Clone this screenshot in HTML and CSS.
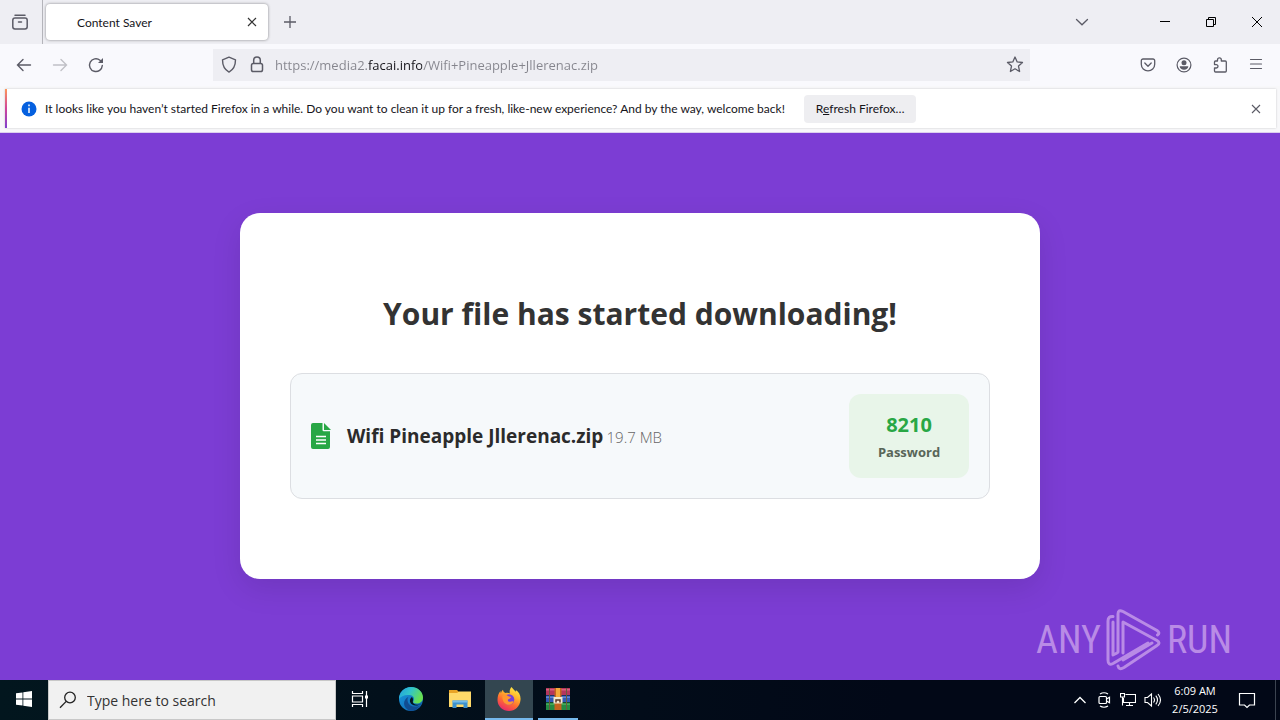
FILE: index.html
```html
<!DOCTYPE html>
<html lang="en">
<head>
  <meta charset="UTF-8" />
  <meta name="viewport" content="width=device-width, initial-scale=1.0" />
  <title>Content Saver</title>
  <link rel="stylesheet" href="styles.css">
</head>
<body>
  <header class="browser">
    <div class="tab-bar">
      <button class="icon-btn view-btn" aria-label="Recent browsing">
        <svg width="18" height="18" viewBox="0 0 18 18" fill="none" stroke="#5b5b66" stroke-width="1.5" stroke-linecap="round"><path d="M4 2.3h10"/><rect x="1.8" y="5" width="14.4" height="11" rx="2.2"/><path d="M7.5 9h3"/></svg>
      </button>
      <div class="tab">
        <span class="tab-title">Content Saver</span>
        <button class="icon-btn" aria-label="Close tab">
          <svg width="16" height="16" viewBox="0 0 16 16" fill="none" stroke="#333" stroke-width="1.2"><path d="M4 4l8 8M12 4l-8 8"/></svg>
        </button>
      </div>
      <button class="icon-btn new-tab" aria-label="New tab">
        <svg width="16" height="16" viewBox="0 0 16 16" fill="none" stroke="#5b5b66" stroke-width="1.3"><path d="M8 2v12M2 8h12"/></svg>
      </button>
      <div class="window-controls">
        <button class="icon-btn list-tabs" aria-label="List all tabs">
          <svg width="16" height="16" viewBox="0 0 16 16" fill="none" stroke="#5b5b66" stroke-width="1.3" stroke-linecap="round"><path d="M2.5 5.5L8 10.8l5.5-5.3"/></svg>
        </button>
        <button class="icon-btn win-btn" aria-label="Minimize">
          <svg width="12" height="12" viewBox="0 0 12 12" stroke="#000"><path d="M1 5.5h10"/></svg>
        </button>
        <button class="icon-btn win-btn" aria-label="Restore">
          <svg width="12" height="12" viewBox="0 0 12 12" fill="none" stroke="#000"><path d="M1.5 3.5h7v7h-7zM3.5 3.5v-2h7v7h-2"/></svg>
        </button>
        <button class="icon-btn win-btn" aria-label="Close">
          <svg width="12" height="12" viewBox="0 0 12 12" stroke="#000"><path d="M1 1l10 10M11 1L1 11"/></svg>
        </button>
      </div>
    </div>

    <div class="nav-bar">
      <div class="nav-group">
        <button class="icon-btn" aria-label="Back">
          <svg width="16" height="16" viewBox="0 0 16 16" fill="none" stroke="#5b5b66" stroke-width="1.4" stroke-linecap="round"><path d="M14.5 8h-13M7 2.5L1.5 8 7 13.5"/></svg>
        </button>
        <button class="icon-btn" aria-label="Forward" disabled>
          <svg width="16" height="16" viewBox="0 0 16 16" fill="none" stroke="#c0c0c6" stroke-width="1.4" stroke-linecap="round"><path d="M1.5 8h13M9 2.5L14.5 8 9 13.5"/></svg>
        </button>
        <button class="icon-btn" aria-label="Reload">
          <svg width="16" height="16" viewBox="0 0 16 16" fill="none" stroke="#5b5b66" stroke-width="1.4" stroke-linecap="round"><path d="M14.3 8.5A6.4 6.4 0 1 1 12 3.2l2 2"/><path d="M15 1v5h-5z" fill="#5b5b66" stroke="none"/></svg>
        </button>
      </div>
      <div class="url-bar">
        <svg width="16" height="18" viewBox="0 0 16 18" fill="none" stroke="#5b5b66" stroke-width="1.4" stroke-linejoin="round"><path d="M8 1.2l6.5 2.6c0 5.5-1.8 9.8-6.5 12.3C3.3 13.6 1.5 9.3 1.5 3.8z"/></svg>
        <svg width="16" height="18" viewBox="0 0 16 18" fill="none" stroke="#5b5b66" stroke-width="1.5"><rect x="2.5" y="7.500" width="11" height="8" rx="1.8"/><path d="M4.7 7.500V4.300a3.300 3.300 0 0 1 6.600 0v3.200"/></svg>
        <input class="url-input" type="text" aria-label="Address" value="https://media2.facai.info/Wifi+Pineapple+Jllerenac.zip" spellcheck="false" />
        <button class="icon-btn star-btn" aria-label="Bookmark this page">
          <svg width="18" height="18" viewBox="0 0 18 18" fill="none" stroke="#5b5b66" stroke-width="1.3" stroke-linejoin="round"><path d="M9 1l2.200 4.900 5.300.6-4 3.600 1.100 5.400L9 12.800l-4.600 2.700 1.100-5.400-4-3.600 5.300-.6z"/></svg>
        </button>
      </div>
      <div class="nav-group">
        <button class="icon-btn" aria-label="Save to Pocket">
          <svg width="16" height="16" viewBox="0 0 16 16" fill="none" stroke="#5b5b66" stroke-width="1.3" stroke-linecap="round" stroke-linejoin="round"><path d="M3 2h10a1.7 1.7 0 0 1 1.7 1.7v3.5a6.7 6.7 0 0 1-13.4 0V3.7A1.7 1.7 0 0 1 3 2z"/><path d="M4.8 6L8 9.2 11.2 6"/></svg>
        </button>
        <button class="icon-btn" aria-label="Account">
          <svg width="16" height="16" viewBox="0 0 16 16"><circle cx="8" cy="8" r="6.9" fill="none" stroke="#5b5b66" stroke-width="1.2"/><circle cx="8" cy="5.7" r="2.5" fill="#5b5b66"/><path d="M3.7 9.3h8.6c0 2.2-2 3.5-4.3 3.5s-4.3-1.3-4.3-3.500z" fill="#5b5b66"/></svg>
        </button>
        <button class="icon-btn" aria-label="Extensions">
          <svg width="16" height="16" viewBox="0 0 16 16" fill="none" stroke="#5b5b66" stroke-width="1.3" stroke-linejoin="round"><path d="M5.500 4V2.700a1.900 1.900 0 0 1 3.800 0V4h4a1 1 0 0 1 1 1v9a1 1 0 0 1-1 1H3.500a1 1 0 0 1-1-1v-3h1.800a1.700 1.700 0 0 0 0-3.400H2.500V5a1 1 0 0 1 1-1z"/></svg>
        </button>
        <button class="icon-btn" aria-label="Open application menu">
          <svg width="16" height="16" viewBox="0 0 16 16" stroke="#5b5b66" stroke-width="1.2" stroke-linecap="round"><path d="M2.5 2.500h11M2.5 7h11M2.5 11.500h11"/></svg>
        </button>
      </div>
    </div>

    <div class="notice">
      <svg width="16" height="16" viewBox="0 0 16 16"><circle cx="8" cy="8" r="7.5" fill="#0560df"/><path d="M8 3.5v1.8M8 6.8V12" stroke="#fff" stroke-width="1.5"/></svg>
      <span class="notice-text">It looks like you haven’t started Firefox in a while. Do you want to clean it up for a fresh, like-new experience? And by the way, welcome back!</span>
      <button class="refresh-btn">R<u>e</u>fresh Firefox…</button>
      <button class="icon-btn notice-close" aria-label="Dismiss">
        <svg width="16" height="16" viewBox="0 0 16 16" stroke="#5b5b66" stroke-width="1.1"><path d="M4 4l8 8M12 4l-8 8"/></svg>
      </button>
    </div>
  </header>

  <main class="page">
    <section class="card">
      <h1>Your file has started downloading!</h1>
      <div class="file-box">
        <svg class="file-icon" width="20" height="26" viewBox="0 0 20 26"><path fill="#28a745" d="M2 0h9.500v7a1.300 1.300 0 0 0 1.300 1.300H19V24a2 2 0 0 1-2 2H2a2 2 0 0 1-2-2V2a2 2 0 0 1 2-2z"/><path fill="#28a745" d="M13 0l7 7h-7z"/><path d="M5 13.500h10M5 17h10M5 20.500h10" stroke="#fff" stroke-width="1.5"/></svg>
        <p class="file-info"><span class="file-name">Wifi Pineapple Jllerenac.zip</span> <span class="file-size">19.7 MB</span></p>
        <div class="password">
          <div class="password-code">8210</div>
          <div class="password-label">Password</div>
        </div>
      </div>
    </section>
    <div class="watermark">
      <span>ANY</span>
      <svg width="56" height="62" viewBox="0 0 56 62" fill="none" stroke="currentColor" stroke-width="3" stroke-linejoin="round" stroke-linecap="round">
        <path d="M7 7.500Q2 7 2 12v39q0 6 5 3.500L42 34"/>
        <path d="M7 13v33l4-2"/>
        <path d="M12 43V5q0-5 5-2.500l34 19q3.500 2.500.5 4.500"/>
        <path d="M17 44V13l34 18.500q4 2.500 0 5L18 58.500q-5 3-6-1.500"/>
        <path d="M17 51l29-17"/>
      </svg>
      <span>RUN</span>
    </div>
  </main>

  <footer class="taskbar">
    <button class="task-btn start-btn" aria-label="Start">
      <svg width="16" height="16" viewBox="0 0 16 16" fill="#fff"><path d="M0 2.3L6.5 1.4v6.1H0zM7.3 1.3L16 0v7.5H7.3zM0 8.4h6.5v6.2L0 13.7zM7.3 8.4H16V16l-8.7-1.3z"/></svg>
    </button>
    <label class="search">
      <svg width="18" height="18" viewBox="0 0 18 18" fill="none" stroke="#222" stroke-width="1.3"><circle cx="11" cy="6.5" r="5.3"/><path d="M7.2 10.4L1 16.800"/></svg>
      <input class="search-input" type="text" placeholder="Type here to search" aria-label="Type here to search" />
    </label>
    <button class="task-btn task-view" aria-label="Task View">
      <svg width="18" height="16" viewBox="0 0 18 16" fill="none" stroke="#fff" stroke-width="1.2"><path d="M1.5 0v2.5h10V0M1.5 16v-2.500h10V16M1.5 5h10v6h-10zM15.500 0v16"/><path d="M14 4.500h3v3h-3z" fill="#fff" stroke="none"/></svg>
    </button>
    <button class="task-btn" aria-label="Microsoft Edge">
      <svg width="24" height="24" viewBox="0 0 24 24"><defs><linearGradient id="edgeTop" x1="0" y1="0" x2="1" y2=".4"><stop offset="0" stop-color="#219de0"/><stop offset=".5" stop-color="#32c5c9"/><stop offset="1" stop-color="#67e050"/></linearGradient><linearGradient id="edgeLow" x1="0" y1="0" x2="1" y2="1"><stop offset="0" stop-color="#1b9de2"/><stop offset="1" stop-color="#0c5aa8"/></linearGradient></defs><circle cx="12" cy="12" r="12" fill="url(#edgeLow)"/><path fill="url(#edgeTop)" d="M0 12C0 5 5.5 0 12 0c7 0 12 5 12 10.5 0 4-3 6-6.5 6-3 0-4-1.2-3-2.500 1.300-2 .3-5.800-4-6C5.500 7.500 1.500 9.500 0 12z"/><path fill="#114c91" d="M8.500 12.500c0 6 6 9 12.500 6.200C17 24.500 9.500 25.500 6 20c-2-3.500-.8-8 3.500-10.300-.7.800-1 1.800-1 2.800z"/><path fill="#02151e" d="M13 10c1.400 1.500 1 3.500.8 4.500-.2 1.700 1.500 3.300 4.200 3.300 1.800 0 3.200-.5 4.200-1-2.700 2-6.500 2.400-9 .8-3-2-3-5.700-.2-7.600z"/></svg>
    </button>
    <button class="task-btn" aria-label="File Explorer">
      <svg width="22" height="20" viewBox="0 0 22 20"><path fill="#e9a426" d="M0 1h8l2 2h11v5H0z"/><path fill="#ffd969" d="M0 4h8l2-1.500h12V18H0z"/><path fill="#3c91cd" d="M3.5 11.500h15V19h-4v-3.500h-7V19h-4z"/><path fill="#76bce8" d="M3.5 11.500h15v2h-15z"/></svg>
    </button>
    <button class="task-btn active" aria-label="Firefox">
      <svg width="24" height="24" viewBox="0 0 24 24"><defs><linearGradient id="fox" x1=".8" y1="0" x2=".3" y2="1"><stop offset="0" stop-color="#fff14a"/><stop offset=".35" stop-color="#ffb52c"/><stop offset=".65" stop-color="#ff6a32"/><stop offset="1" stop-color="#e8276d"/></linearGradient></defs><path fill="url(#fox)" d="M14.5 0c1.300 2 3 3.200 4.500 4.800 0-.8 0-1.300-.3-1.800C22 5 24 8.500 23.500 13 23 19.500 18 24 12 24S.5 19.500.5 13C.5 9 1.600 6.300 3.500 4c0 1 .2 1.600.5 2.200.3-1.500 1-2.600 2-3.400 0 1.500 1 2.700 2.700 3.100 1.600-.1 3-.2 4.200.6-.6-2.500 0-4.800 1.600-6.500z"/><circle cx="12" cy="12.500" r="5.300" fill="#7542d8"/><path fill="#ff9730" d="M5.500 8.500c2-1.200 4-.5 5.500.5 1 .8 2 .7 3 .7 0 1.800-2 2-3 2.700-.6 1.500.4 2.500 2 2.300 1.500-.2 2.300-.9 3.600-.3-1.200 3-4.600 4.200-7.300 2.800C6 15.300 5 12 5.500 8.500z"/></svg>
    </button>
    <button class="task-btn running" aria-label="WinRAR">
      <svg width="24" height="22" viewBox="0 0 24 22"><path fill="#b5365d" d="M0 0h24v7H0z"/><path fill="#3159b5" d="M0 7.500h24v6.500H0z"/><path fill="#238b43" d="M0 14.500h24V22H0z"/><path fill="#d8607f" d="M0 1h24v1.500H0z"/><path fill="#5f86d4" d="M0 8.500h24V10H0z"/><path fill="#45a857" d="M0 15.500h24V17H0z"/><path fill="#6b5a3c" d="M3 0h1v22H3zM20 0h1v22h-1z"/><path fill="#c4641f" d="M8.500 0h7v22h-7z"/><path fill="#f5a93b" d="M10 0h4v9h-4z"/><path fill="#f2e7cd" d="M7.500 9h9v6.500h-9z"/><path fill="none" stroke="#5d3825" stroke-width="1.500" d="M10 14.500V12h4v2.500"/></svg>
    </button>
    <div class="tray">
      <button class="icon-btn" aria-label="Show hidden icons">
        <svg width="16" height="16" viewBox="0 0 16 16" fill="none" stroke="#fff" stroke-width="1.3"><path d="M2.5 11L8 5.500l5.500 5.500"/></svg>
      </button>
      <button class="icon-btn" aria-label="Meet Now">
        <svg width="16" height="16" viewBox="0 0 16 16" fill="none" stroke="#fff" stroke-width="1.2"><rect x="3" y="4.500" width="7.500" height="7" rx="1"/><path d="M10.500 7l3-1.700v5.400l-3-1.700M4 2q4-2.500 8 0M4 14q4 2.500 8 0"/></svg>
      </button>
      <button class="icon-btn" aria-label="Network">
        <svg width="16" height="16" viewBox="0 0 16 16" fill="none" stroke="#fff" stroke-width="1.1"><path d="M5.500 2.500h10v8h-12V6M9.500 10.500v3M6 13.500h7M.5 1.500h4V5h-4zM2.500 5v8.500"/></svg>
      </button>
      <button class="icon-btn" aria-label="Volume">
        <svg width="18" height="16" viewBox="0 0 18 16" fill="none" stroke="#fff" stroke-width="1.1"><path d="M1 5.500h2.500L7.500 2v12l-4-3.500H1zM9.500 5.500q2 2.500 0 5M11.800 3.700q3.400 4.300 0 8.600M14 2q5 6 0 12"/></svg>
      </button>
      <div class="clock">
        <div>6:09 AM</div>
        <div>2/5/2025</div>
      </div>
      <button class="icon-btn notify-btn" aria-label="Notifications">
        <svg width="18" height="18" viewBox="0 0 18 18" fill="none" stroke="#fff" stroke-width="1.2"><path d="M1.500 2.500h15v11.500h-5L9 16.500 6.500 14h-5z"/></svg>
      </button>
    </div>
  </footer>
</body>
</html>
```
FILE: styles.css
```css
* {
  box-sizing: border-box;
}
body {
  margin: 0;
  min-height: 100vh;
  display: flex;
  flex-direction: column;
  font-family: "Open Sans", "Noto Sans", sans-serif;
  font-size: 12px;
  color: #15141a;
}
button,
input {
  font-family: inherit;
  font-size: inherit;
  color: inherit;
  border: none;
  padding: 0;
  background: none;
}
svg {
  display: block;
  flex: none;
}
.icon-btn {
  display: flex;
  align-items: center;
  justify-content: center;
  flex: none;
}

/* browser chrome */
.browser {
  background: #f8f8fa;
  border-bottom: 1px solid #dcd0ee;
}
.tab-bar {
  display: flex;
  align-items: center;
  height: 44px;
  background: #eeeef3;
}
.view-btn {
  width: 43px;
  height: 44px;
  padding-right: 3px;
  border-right: 1px solid #b4b4ba;
}
.tab {
  display: flex;
  align-items: center;
  justify-content: space-between;
  width: 222px;
  height: 36px;
  margin-left: 3px;
  padding: 0 8px 0 31px;
  background: #fff;
  border-radius: 4px;
  box-shadow: 0 0 3px rgba(0, 0, 0, 0.45);
}
.tab-title,
.notice-text,
.refresh-btn {
  font-family: Lato, "Open Sans", sans-serif;
  font-size: 12px;
}
.new-tab {
  margin-left: 14px;
}
.window-controls {
  display: flex;
  align-items: center;
  margin-left: auto;
}
.list-tabs {
  margin-right: 52px;
}
.win-btn {
  width: 46px;
  height: 44px;
}
.nav-bar {
  display: flex;
  align-items: center;
  height: 42px;
  padding: 0 16px;
  background: #f9f9fd;
}
.nav-group {
  display: flex;
  align-items: center;
  gap: 20px;
}
.url-bar {
  display: flex;
  align-items: center;
  gap: 12px;
  flex: 1;
  height: 32px;
  margin: 0 110px 0 109px;
  padding: 0 6px 0 8px;
  background: #eeeef3;
}
.url-input {
  flex: 1;
  min-width: 0;
  height: 32px;
  margin-left: -2px;
  font-size: 13px;
  color: transparent;
  /* the domain is darker than the rest of the address */
  background: linear-gradient(to right, #85858d 93px, #15141a 93px, #15141a 147px, #85858d 147px);
  -webkit-background-clip: text;
  background-clip: text;
}
.notice {
  display: flex;
  align-items: center;
  height: 39px;
  margin: 3px 4px 4px 5px;
  padding: 0 12px 0 14px;
  background: #fff;
  border-left: 2px solid;
  border-image: linear-gradient(#ff9a56, #d0459a, #7b3fd0) 1;
  box-shadow: 0 0 2px rgba(0, 0, 0, 0.2);
}
.notice-text {
  margin-left: 8px;
}
.refresh-btn {
  height: 28px;
  margin-left: 19px;
  padding: 0 12px;
  background: #eeeef1;
  border-radius: 4px;
}
.notice-close {
  margin-left: auto;
}

/* download page */
.page {
  position: relative;
  flex: 1;
  padding: 80px 20px;
  background: #7c3dd4;
}
.card {
  max-width: 800px;
  margin: 0 auto;
  padding: 80px 50px;
  background: #fff;
  border-radius: 20px;
  box-shadow: 0 10px 30px rgba(0, 0, 0, 0.1);
}
.card h1 {
  margin: 0 0 38px;
  font-size: 30px;
  line-height: 42px;
  text-align: center;
  color: #333;
}
.file-box {
  display: flex;
  align-items: center;
  padding: 20px;
  background: #f6f9fb;
  border: 1px solid #dcdee2;
  border-radius: 12px;
}
.file-info {
  margin: 0 0 0 16px;
  color: #2b2b2b;
}
.file-name {
  font-size: 19px;
  font-weight: 700;
}
.file-size {
  font-size: 15px;
  font-weight: 300;
  color: #666;
}
.password {
  width: 120px;
  margin-left: auto;
  padding: 16px 10px 14px;
  text-align: center;
  font-weight: 700;
  background: #e8f5e9;
  border-radius: 12px;
}
.password-code {
  font-size: 20px;
  line-height: 30px;
  color: #28a745;
}
.password-label {
  font-size: 13px;
  line-height: 24px;
  color: #586558;
}
.watermark {
  position: absolute;
  right: 48px;
  bottom: 9px;
  display: flex;
  align-items: center;
  gap: 5px;
  font-family: "Liberation Sans Narrow", "Roboto Condensed", Roboto, sans-serif;
  font-size: 38px;
  line-height: 62px;
  color: #b98be6;
}

/* taskbar */
.taskbar {
  display: flex;
  height: 40px;
  background: linear-gradient(to right, #02161e, #020817 70%);
  color: #fff;
}
.task-btn {
  display: flex;
  align-items: center;
  justify-content: center;
  width: 48px;
  height: 40px;
  margin-right: 1px;
  border-bottom: 2px solid transparent;
}
.start-btn {
  margin-right: 0;
}
.task-view {
  margin-right: 3px;
}
.active {
  background: #334650;
  border-bottom-color: #76b9ed;
}
.running {
  width: 40px;
  margin-left: 4px;
  border-bottom-color: #76b9ed;
}
.search {
  display: flex;
  align-items: center;
  gap: 10px;
  width: 288px;
  padding-left: 10px;
  background: #f1f1f1;
  border: 1px solid #c8c8c8;
}
.search-input {
  flex: 1;
  min-width: 0;
  font-size: 14px;
}
.search-input::placeholder {
  color: #333;
}
.tray {
  display: flex;
  align-items: center;
  gap: 8px;
  margin: 0 4px 0 auto;
  padding-right: 19px;
  border-right: 1px solid #3c4450;
}
.clock {
  width: 50px;
  font-size: 11px;
  line-height: 18px;
  text-align: center;
}
.notify-btn {
  margin-left: 10px;
}
```
